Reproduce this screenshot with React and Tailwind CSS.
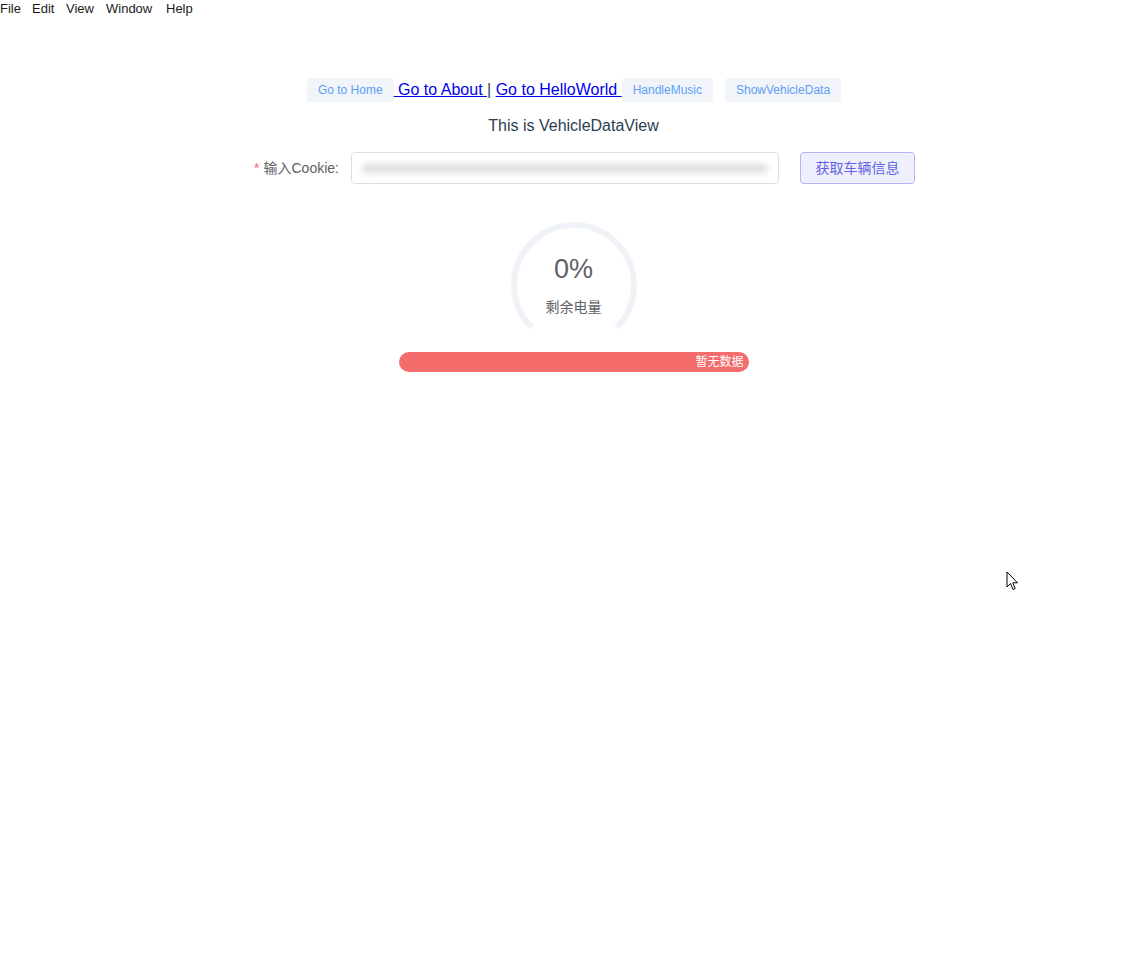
import React from 'react';

const MENU = [
  { label: 'File', w: 'w-[32px]' },
  { label: 'Edit', w: 'w-[34px]' },
  { label: 'View', w: 'w-[40px]' },
  { label: 'Window', w: 'w-[60px]' },
  { label: 'Help', w: 'w-[40px]' },
];

function NavButton({ children, className = '' }) {
  return (
    <button
      className={`h-[24px] px-[11px] rounded-[4px] bg-[#f1f5fa] text-[#5f9ef5] text-[12px] leading-none ${className}`}
    >
      {children}
    </button>
  );
}

function Dashboard() {
  // 270 degree arc, gap at the bottom, 0% so only the track shows
  return (
    <div className="relative w-[126px] h-[126px]">
      <svg width="126" height="126" viewBox="0 0 126 126" className="absolute left-0 top-0">
        <path
          d="M 20.57 105.43 A 60 60 0 1 1 105.43 105.43"
          fill="none"
          stroke="#eff3f8"
          strokeWidth="6"
        />
      </svg>
      <div className="absolute inset-x-0 top-[30px] text-center text-[27px] leading-[34px] text-[#606266]">
        0%
      </div>
      <div className="absolute inset-x-0 top-[75px] text-center text-[14px] leading-[20px] text-[#606266]">
        剩余电量
      </div>
    </div>
  );
}

export default function App() {
  return (
    <div
      className="relative min-h-[961px] bg-white"
      style={{ fontFamily: '"Liberation Sans", Arial, "Noto Sans CJK SC", sans-serif' }}
    >
      {/* window menu */}
      <div className="flex h-[18px] items-center text-[13px] text-[#1a1a1a]">
        {MENU.map((m) => (
          <span key={m.label} className={m.w}>
            {m.label}
          </span>
        ))}
      </div>

      <div className="flex flex-col items-center">
        {/* nav row */}
        <div className="mt-[60px] flex items-center ml-[1px]">
          <NavButton>Go to Home</NavButton>
          <a href="#" className="text-[16px] text-[#0000ee] underline">
            &nbsp;Go to About&nbsp;
          </a>
          <span className="text-[16px] text-[#2c3e50]">|&nbsp;</span>
          <a href="#" className="text-[16px] text-[#0000ee] underline">
            Go to HelloWorld&nbsp;
          </a>
          <NavButton>HandleMusic</NavButton>
          <NavButton className="ml-[12px]">ShowVehicleData</NavButton>
        </div>

        <div className="mt-[14px] text-[16px] leading-[20px] text-[#2c3e50]">This is VehicleDataView</div>

        {/* cookie form */}
        <div className="mt-[16px] flex items-center ml-[22px]">
          <label className="pr-[12px] text-[14px] text-[#606266]">
            <span className="text-[#f56c6c] mr-[4px]">*</span>输入Cookie:
          </label>
          <div className="w-[428px] h-[32px] rounded-[4px] border border-[#dcdfe6] flex items-center px-[10px] overflow-hidden">
            <div className="w-full h-[9px] rounded-full bg-[#dedede] blur-[3px]" />
          </div>
          <button className="ml-[21px] w-[115px] h-[32px] rounded-[4px] border border-[#b4b6f4] bg-[#efeffd] text-[14px] text-[#6264e2]">
            获取车辆信息
          </button>
        </div>

        <div className="mt-[38px]">
          <Dashboard />
        </div>

        {/* progress */}
        <div className="mt-[4px] w-[350px] h-[20px] rounded-full bg-[#f56c6c] flex items-center justify-end pr-[5px] text-[12px] text-white">
          暂无数据
        </div>
      </div>

      {/* mouse pointer */}
      <svg
        width="14"
        height="22"
        viewBox="0 0 14 22"
        className="absolute left-[1006px] top-[571px]"
      >
        <path
          d="M1 1 L1 16 L4.5 12.5 L7 18.5 L9.2 17.5 L6.8 11.8 L11.5 11.8 Z"
          fill="#fff"
          stroke="#000"
          strokeWidth="1"
          strokeLinejoin="round"
        />
      </svg>
    </div>
  );
}
